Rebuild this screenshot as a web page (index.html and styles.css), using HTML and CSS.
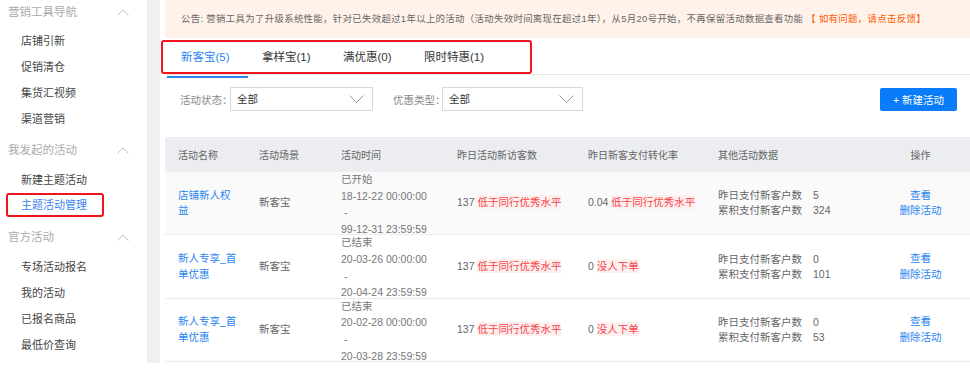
FILE: index.html
```html
<!DOCTYPE html>
<html lang="zh-CN">
<head>
    <meta charset="UTF-8">
    <title>主题活动管理</title>
    <link rel="stylesheet" href="styles.css">
</head>
<body>
    <div class="layout">
        <div class="sidebar">
            <div class="group-title">营销工具导航<svg class="chev" width="12" height="7" viewBox="0 0 12 7"><polyline points="0.5,6.5 6,1 11.5,6.5" fill="none" stroke="#c4c4c4" stroke-width="1"/></svg></div>
            <div class="nav-item">店铺引新</div>
            <div class="nav-item">促销清仓</div>
            <div class="nav-item">集货汇视频</div>
            <div class="nav-item">渠道营销</div>
            <div class="group-title">我发起的活动<svg class="chev" width="12" height="7" viewBox="0 0 12 7"><polyline points="0.5,6.5 6,1 11.5,6.5" fill="none" stroke="#c4c4c4" stroke-width="1"/></svg></div>
            <div class="nav-item">新建主题活动</div>
            <div class="nav-item active">主题活动管理</div>
            <div class="group-title">官方活动<svg class="chev" width="12" height="7" viewBox="0 0 12 7"><polyline points="0.5,6.5 6,1 11.5,6.5" fill="none" stroke="#c4c4c4" stroke-width="1"/></svg></div>
            <div class="nav-item">专场活动报名</div>
            <div class="nav-item">我的活动</div>
            <div class="nav-item">已报名商品</div>
            <div class="nav-item">最低价查询</div>
        </div>
        <div class="gutter"></div>
        <div class="main">
            <div class="notice">公告: 营销工具为了升级系统性能，针对已失效超过1年以上的活动（活动失效时间离现在超过1年），从5月20号开始，不再保留活动数据查看功能 <span class="notice-link">【 如有问题，请点击反馈】</span></div>
            <div class="tabs">
                <div class="tab-box">
                    <div class="tab active">新客宝(5)</div>
                    <div class="tab">拿样宝(1)</div>
                    <div class="tab">满优惠(0)</div>
                    <div class="tab">限时特惠(1)</div>
                </div>
            </div>
            <div class="filters">
                <span class="filter-label">活动状态：</span>
                <div class="select select-status">全部<svg class="arrow" width="15" height="8" viewBox="0 0 15 8"><polyline points="0.5,0.5 7.5,7.5 14.5,0.5" fill="none" stroke="#999" stroke-width="1"/></svg></div>
                <span class="filter-label second">优惠类型：</span>
                <div class="select select-type">全部<svg class="arrow" width="15" height="8" viewBox="0 0 15 8"><polyline points="0.5,0.5 7.5,7.5 14.5,0.5" fill="none" stroke="#999" stroke-width="1"/></svg></div>
                <button class="btn-new">+ 新建活动</button>
            </div>
            <table class="grid">
                <colgroup>
                    <col style="width:81px">
                    <col style="width:82px">
                    <col style="width:116px">
                    <col style="width:131px">
                    <col style="width:130px">
                    <col style="width:166px">
                    <col>
                </colgroup>
                <thead>
                    <tr>
                        <th>活动名称</th>
                        <th>活动场景</th>
                        <th>活动时间</th>
                        <th>昨日活动新访客数</th>
                        <th>昨日新客支付转化率</th>
                        <th>其他活动数据</th>
                        <th class="ops">操作</th>
                    </tr>
                </thead>
                <tbody>
                    <tr class="shaded">
                        <td><a class="name">店铺新人权益</a></td>
                        <td>新客宝</td>
                        <td class="time"><div class="time-lines">已开始<br>18-12-22 00:00:00<br>&nbsp;-<br>99-12-31 23:59:59</div></td>
                        <td>137 <span class="tag">低于同行优秀水平</span></td>
                        <td>0.04 <span class="tag">低于同行优秀水平</span></td>
                        <td><div class="stat"><span>昨日支付新客户数</span><span>5</span></div><div class="stat"><span>累积支付新客户数</span><span>324</span></div></td>
                        <td class="ops"><a>查看</a><br><a>删除活动</a></td>
                    </tr>
                    <tr>
                        <td><a class="name">新人专享_首单优惠</a></td>
                        <td>新客宝</td>
                        <td class="time"><div class="time-lines">已结束<br>20-03-26 00:00:00<br>&nbsp;-<br>20-04-24 23:59:59</div></td>
                        <td>137 <span class="tag">低于同行优秀水平</span></td>
                        <td>0 <span class="tag">没人下单</span></td>
                        <td><div class="stat"><span>昨日支付新客户数</span><span>0</span></div><div class="stat"><span>累积支付新客户数</span><span>101</span></div></td>
                        <td class="ops"><a>查看</a><br><a>删除活动</a></td>
                    </tr>
                    <tr>
                        <td><a class="name">新人专享_首单优惠</a></td>
                        <td>新客宝</td>
                        <td class="time"><div class="time-lines">已结束<br>20-02-28 00:00:00<br>&nbsp;-<br>20-03-28 23:59:59</div></td>
                        <td>137 <span class="tag">低于同行优秀水平</span></td>
                        <td>0 <span class="tag">没人下单</span></td>
                        <td><div class="stat"><span>昨日支付新客户数</span><span>0</span></div><div class="stat"><span>累积支付新客户数</span><span>53</span></div></td>
                        <td class="ops"><a>查看</a><br><a>删除活动</a></td>
                    </tr>
                </tbody>
            </table>
        </div>
    </div>
</body>
</html>
```

FILE: styles.css
```css
body {
    margin: 0;
    font-family: "Liberation Sans", "Noto Sans CJK SC", sans-serif;
    font-size: 11px;
    color: #666;
    background: #fff;
    overflow: hidden;
}
.layout {
    display: flex;
    height: 363px;
}
.sidebar {
    width: 147px;
    flex-shrink: 0;
    display: flex;
    flex-direction: column;
    background: #fff;
}
.group-title {
    position: relative;
    height: 24px;
    line-height: 24px;
    margin: 6px 0 5px;
    padding-left: 8px;
    color: #aaa;
    font-size: 11.5px;
}
.group-title:first-child {
    margin-top: 0;
    margin-bottom: 4px;
}
.chev {
    position: absolute;
    left: 117px;
    top: 9px;
}
.nav-item {
    height: 26px;
    line-height: 26px;
    padding-left: 21px;
    color: #444;
    font-size: 11px;
}
.nav-item.active {
    color: #3b7ff0;
    margin: 0 43px 2px 6px;
    padding-left: 13px;
    height: 20px;
    line-height: 20px;
    border: 2px solid #f0141e;
    border-radius: 3px;
}
.gutter {
    width: 13px;
    flex-shrink: 0;
    background: #f0f0f0;
}
.main {
    flex: 1;
    padding-left: 5px;
    min-width: 0;
}
.notice {
    height: 38px;
    line-height: 38px;
    background: #fef2ea;
    padding-left: 16px;
    white-space: nowrap;
    color: #666;
    font-size: 9.4px;
    letter-spacing: 0.35px;
}
.notice-link {
    color: #ff5a00;
}
.tabs {
    height: 36px;
    border-bottom: 1px solid #e8e8e8;
    position: relative;
}
.tab-box {
    position: absolute;
    left: -4px;
    top: 2px;
    width: 365px;
    height: 30px;
    border: 2px solid #f0141e;
    border-radius: 3px;
    padding-left: 2px;
    display: flex;
    box-sizing: content-box;
}
.tab {
    width: 81px;
    padding-left: 16px;
    box-sizing: border-box;
    line-height: 30px;
    font-size: 11.5px;
    color: #333;
}
.tab.active {
    color: #2a86f0;
}
.tab.active::after {
    content: "";
    position: absolute;
    left: 4px;
    top: 34px;
    width: 81px;
    height: 2px;
    background: #2a86f0;
}
.filters {
    display: flex;
    align-items: center;
    height: 24px;
    margin-top: 12px;
    padding-left: 15px;
    padding-right: 13px;
}
.filter-label {
    flex-shrink: 0;
    width: 50px;
    white-space: nowrap;
    color: #888;
    font-size: 10.5px;
}
.filter-label.second {
    width: 49px;
    margin-left: 20px;
}
.select {
    position: relative;
    flex-shrink: 0;
    height: 22px;
    line-height: 22px;
    border: 1px solid #d9d9d9;
    padding-left: 6px;
    color: #333;
    font-size: 10.5px;
    box-sizing: content-box;
}
.select-status {
    width: 135px;
}
.select-type {
    width: 133px;
}
.arrow {
    position: absolute;
    right: 8px;
    top: 7px;
}
.btn-new {
    margin-left: auto;
    height: 23px;
    width: 77px;
    border: none;
    border-radius: 2px;
    background: #0a7cfa;
    color: #fff;
    font-family: inherit;
    font-size: 10.5px;
    padding: 0;
}
.grid {
    width: 100%;
    margin-top: 26px;
    border-collapse: collapse;
    table-layout: fixed;
}
.grid th {
    background: #ebedf0;
    height: 35px;
    text-align: left;
    font-weight: normal;
    color: #666;
    padding: 0 0 0 13px;
    font-size: 10px;
}
.grid td {
    height: 62px;
    padding: 0 0 0 13px;
    border-bottom: 1px solid #ececec;
    color: #666;
    font-size: 10.5px;
    line-height: 15.5px;
    vertical-align: middle;
}
.grid tr.shaded td {
    background: #fafafa;
}
.grid th.ops,
.grid td.ops {
    text-align: center;
    padding-left: 0;
}
.time-lines {
    line-height: 16.6px;
    margin: -1px 0 -3px;
    color: #777;
}
.name {
    color: #2a86f0;
    display: block;
    width: 60px;
}
.ops a {
    color: #2a86f0;
    line-height: 15px;
}
.tag {
    color: #f5454a;
    background: #fff0f0;
    padding: 1px 0;
}
.stat {
    display: flex;
    line-height: 15px;
}
.stat span:first-child {
    width: 95px;
}
```
